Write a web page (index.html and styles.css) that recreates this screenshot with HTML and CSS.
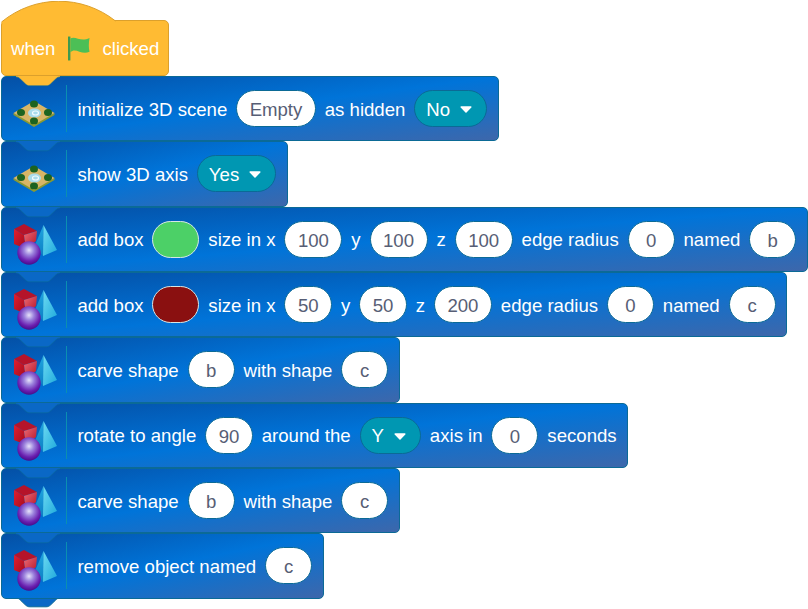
FILE: index.html
```html
<!DOCTYPE html>
<html lang="en">
<head>
    <meta charset="UTF-8">
    <title>Scratch 3D blocks</title>
    <link rel="stylesheet" href="styles.css">
</head>
<body>
    <!-- shared shapes -->
    <svg class="defs" aria-hidden="true">
        <defs>
            <linearGradient id="cubeLeft" x1="0" y1="0" x2="1" y2="1">
                <stop offset="0" stop-color="#e01f30"/>
                <stop offset="1" stop-color="#a00a1c"/>
            </linearGradient>
            <linearGradient id="cubeRight" x1="0" y1="0" x2="1" y2="1">
                <stop offset="0" stop-color="#ee6a74"/>
                <stop offset="1" stop-color="#b01024"/>
            </linearGradient>
            <linearGradient id="pyrLeft" x1="0" y1="0" x2="0" y2="1">
                <stop offset="0" stop-color="#1fa6e0"/>
                <stop offset="1" stop-color="#0d7fc4"/>
            </linearGradient>
            <linearGradient id="pyrRight" x1="0" y1="0" x2="1" y2="1">
                <stop offset="0" stop-color="#6edcf2"/>
                <stop offset="1" stop-color="#1ea9dc"/>
            </linearGradient>
            <radialGradient id="ball" cx="0.5" cy="0.38" r="0.62">
                <stop offset="0" stop-color="#e6e2fa"/>
                <stop offset="0.35" stop-color="#9a80dc"/>
                <stop offset="0.75" stop-color="#6a1fb0"/>
                <stop offset="1" stop-color="#480c8a"/>
            </radialGradient>
            <symbol id="notch" viewBox="0 0 72 13">
                <path d="M14 0V1c2 0 3 .8 4.300 2l5.200 5c1.200 1.100 2.300 1.800 4.500 1.800h16c2.200 0 3.300-.7 4.500-1.800l5.200-5c1.300-1.200 2.300-2 4.300-2V0Z" fill="currentColor"/>
                <path d="M14 1c2 0 3 .8 4.300 2l5.200 5c1.200 1.100 2.300 1.800 4.500 1.800h16c2.200 0 3.300-.7 4.500-1.800l5.200-5c1.300-1.200 2.300-2 4.300-2" fill="none" stroke="#0b6a96" stroke-opacity="0.6"/>
            </symbol>
            <symbol id="shapes" viewBox="0 0 48 46">
                <path d="M32.500 4 24 24 32 35Z" fill="url(#pyrLeft)"/>
                <path d="M32.500 4 32 35 46 29Z" fill="url(#pyrRight)"/>
                <path d="M3 8 13 3 26 10 13 14Z" fill="#b5142a"/>
                <path d="M3 8 13 14 15 28 3 23Z" fill="url(#cubeLeft)"/>
                <path d="M13 14 26 10 25 20 15 28Z" fill="url(#cubeRight)"/>
                <circle cx="18" cy="32" r="11.700" fill="url(#ball)"/>
            </symbol>
            <symbol id="floor" viewBox="0 0 42 28">
                <path d="M0.500 13 21 24 41.500 13V15L21 27 0.500 15Z" fill="#8a9a30"/>
                <path d="M0.500 13 21 1 41.500 13 21 25Z" fill="#d8b566"/>
                <ellipse cx="21.500" cy="13" rx="6.500" ry="4.500" fill="#a9dcec"/>
                <ellipse cx="22.500" cy="13" rx="3" ry="2" fill="none" stroke="#f2fbff" stroke-width="1.200"/>
                <ellipse cx="21" cy="4" rx="4" ry="3.500" fill="#1c6320"/>
                <ellipse cx="8" cy="12.500" rx="4" ry="3.500" fill="#1c6320"/>
                <ellipse cx="35" cy="12.500" rx="4" ry="3.500" fill="#1c6320"/>
                <ellipse cx="21" cy="21" rx="4" ry="3.500" fill="#1c6320"/>
            </symbol>
            <symbol id="caret" viewBox="0 0 12 7">
                <path d="M1.200 1H10.800L6 6Z" fill="#fff" stroke="#fff" stroke-width="1.500" stroke-linejoin="round"/>
            </symbol>
        </defs>
    </svg>

    <div class="stack">
        <!-- hat block -->
        <div class="hat">
            <svg class="hat-top" viewBox="0 0 116 22"><path d="M0.500 21C34 -6.500 81 -6.500 114.500 20V22H0.500Z" fill="#ffbb33"/><path d="M0.500 21C34 -6.500 81 -6.500 114.500 20" fill="none" stroke="#dca02c"/></svg>
            <span>when</span>
            <svg class="flag" viewBox="0 0 23 25"><path d="M0 0H2.500V25H0Z" fill="#3f9a4e"/><path d="M2.500 2C8 -1 13 6 22.500 1.500 21.500 7 21.500 12 22.500 16 14 20 8 11 2.500 16.500Z" fill="#4cbf56"/></svg>
            <span class="flag-after">clicked</span>
        </div>

        <div class="block">
            <svg class="notch notch-hat"><use href="#notch"/></svg>
            <div class="icon"><svg class="icon-floor"><use href="#floor"/></svg></div>
            <span>initialize 3D scene</span>
            <span class="pill">Empty</span>
            <span>as hidden</span>
            <span class="drop">No<svg class="caret"><use href="#caret"/></svg></span>
        </div>

        <div class="block">
            <svg class="notch"><use href="#notch"/></svg>
            <div class="icon"><svg class="icon-floor"><use href="#floor"/></svg></div>
            <span>show 3D axis</span>
            <span class="drop">Yes<svg class="caret"><use href="#caret"/></svg></span>
        </div>

        <div class="block">
            <svg class="notch"><use href="#notch"/></svg>
            <div class="icon"><svg class="icon-shapes"><use href="#shapes"/></svg></div>
            <span>add box</span>
            <span class="swatch swatch-green"></span>
            <span>size in x</span>
            <span class="pill">100</span>
            <span>y</span>
            <span class="pill">100</span>
            <span>z</span>
            <span class="pill">100</span>
            <span>edge radius</span>
            <span class="pill">0</span>
            <span>named</span>
            <span class="pill">b</span>
        </div>

        <div class="block">
            <svg class="notch"><use href="#notch"/></svg>
            <div class="icon"><svg class="icon-shapes"><use href="#shapes"/></svg></div>
            <span>add box</span>
            <span class="swatch swatch-red"></span>
            <span>size in x</span>
            <span class="pill">50</span>
            <span>y</span>
            <span class="pill">50</span>
            <span>z</span>
            <span class="pill">200</span>
            <span>edge radius</span>
            <span class="pill">0</span>
            <span>named</span>
            <span class="pill">c</span>
        </div>

        <div class="block">
            <svg class="notch"><use href="#notch"/></svg>
            <div class="icon"><svg class="icon-shapes"><use href="#shapes"/></svg></div>
            <span>carve shape</span>
            <span class="pill">b</span>
            <span>with shape</span>
            <span class="pill">c</span>
        </div>

        <div class="block">
            <svg class="notch"><use href="#notch"/></svg>
            <div class="icon"><svg class="icon-shapes"><use href="#shapes"/></svg></div>
            <span>rotate to angle</span>
            <span class="pill">90</span>
            <span>around the</span>
            <span class="drop">Y<svg class="caret"><use href="#caret"/></svg></span>
            <span>axis in</span>
            <span class="pill">0</span>
            <span>seconds</span>
        </div>

        <div class="block">
            <svg class="notch"><use href="#notch"/></svg>
            <div class="icon"><svg class="icon-shapes"><use href="#shapes"/></svg></div>
            <span>carve shape</span>
            <span class="pill">b</span>
            <span>with shape</span>
            <span class="pill">c</span>
        </div>

        <div class="block">
            <svg class="notch"><use href="#notch"/></svg>
            <div class="icon"><svg class="icon-shapes"><use href="#shapes"/></svg></div>
            <span>remove object named</span>
            <span class="pill">c</span>
        </div>
        <!-- bump under the last block -->
        <svg class="tail" viewBox="0 0 46 11"><path d="M1 0c2 0 3 .8 4.300 2l5.200 5c1.200 1.100 2.300 1.800 4.500 1.800h16c2.200 0 3.300-.7 4.500-1.800l5.200-5c1.300-1.200 2.300-2 4.300-2Z" fill="#0a68c6"/><path d="M1 0c2 0 3 .8 4.300 2l5.200 5c1.200 1.100 2.300 1.800 4.500 1.800h16c2.200 0 3.300-.7 4.500-1.800l5.200-5c1.300-1.200 2.300-2 4.300-2" fill="none" stroke="#0b6a96"/></svg>
    </div>
</body>
</html>
```

FILE: styles.css
```css
body {
    margin: 0;
    background: #fff;
    font-family: "Liberation Sans", Arial, sans-serif;
    font-size: 18.6px;
    color: #fff;
}
.defs {
    position: absolute;
    width: 0;
    height: 0;
}
.stack {
    display: flex;
    flex-direction: column;
    align-items: flex-start;
    padding: 20px 0 0 1px;
}
.hat {
    position: relative;
    display: flex;
    align-items: center;
    box-sizing: border-box;
    height: 56px;
    padding: 0 9px;
    background: #ffbb33;
    border: 1px solid #dca02c;
    border-radius: 5px;
    white-space: nowrap;
}
.hat-top {
    position: absolute;
    left: -1px;
    top: -20px;
    width: 116px;
    height: 22px;
}
.flag {
    width: 22px;
    height: 25px;
    margin-left: 13px;
}
.flag-after {
    margin-left: 12px;
}
.hat > span,
.block > span {
    flex: none;
    padding-top: 2px;
}
.block {
    position: relative;
    display: flex;
    align-items: center;
    gap: 8.9px;
    box-sizing: border-box;
    height: 65.33px;
    padding-right: 10.5px;
    background: linear-gradient(to bottom right, #0450a6 0%, #0074d9 50%, #3d67ab 100%);
    border: 1px solid #0b6a96;
    border-radius: 5px;
    white-space: nowrap;
}
.notch {
    position: absolute;
    left: 0;
    top: -1px;
    width: 72px;
    height: 13px;
    color: #0a68c6;
}
.notch-hat {
    color: #ffbb33;
}
.tail {
    flex: none;
    width: 46px;
    height: 11px;
    margin: -1px 0 0 14px;
}
.icon {
    position: relative;
    flex: none;
    width: 65px;
    height: 47px;
    margin-right: 1.5px;
    border-right: 1.5px solid #0b8fb0;
    box-sizing: border-box;
}
.icon-floor {
    position: absolute;
    left: 11px;
    top: 15px;
    width: 42px;
    height: 28px;
    overflow: visible;
}
.icon-shapes {
    position: absolute;
    left: 9px;
    top: 5px;
    width: 48px;
    height: 46px;
}
.block > .pill {
    box-sizing: border-box;
    min-width: 47px;
    height: 37px;
    line-height: 37px;
    padding: 0 12.5px;
    text-align: center;
    color: #575e75;
    background: #fff;
    border: 1px solid #0b6a96;
    border-radius: 18.5px;
}
.block > .drop {
    display: flex;
    align-items: center;
    box-sizing: border-box;
    height: 37px;
    padding: 2px 14px 0 11px;
    background: #0097b2;
    border: 1px solid #0b6a96;
    border-radius: 18.5px;
}
.caret {
    width: 12px;
    height: 7px;
    margin-left: 10px;
}
.block > .swatch {
    box-sizing: border-box;
    width: 47px;
    height: 37px;
    padding: 0;
    border: 1px solid #d5e6e6;
    border-radius: 18.5px;
}
.swatch-green {
    background: #4cd067;
}
.swatch-red {
    background: #8a1010;
}
```
